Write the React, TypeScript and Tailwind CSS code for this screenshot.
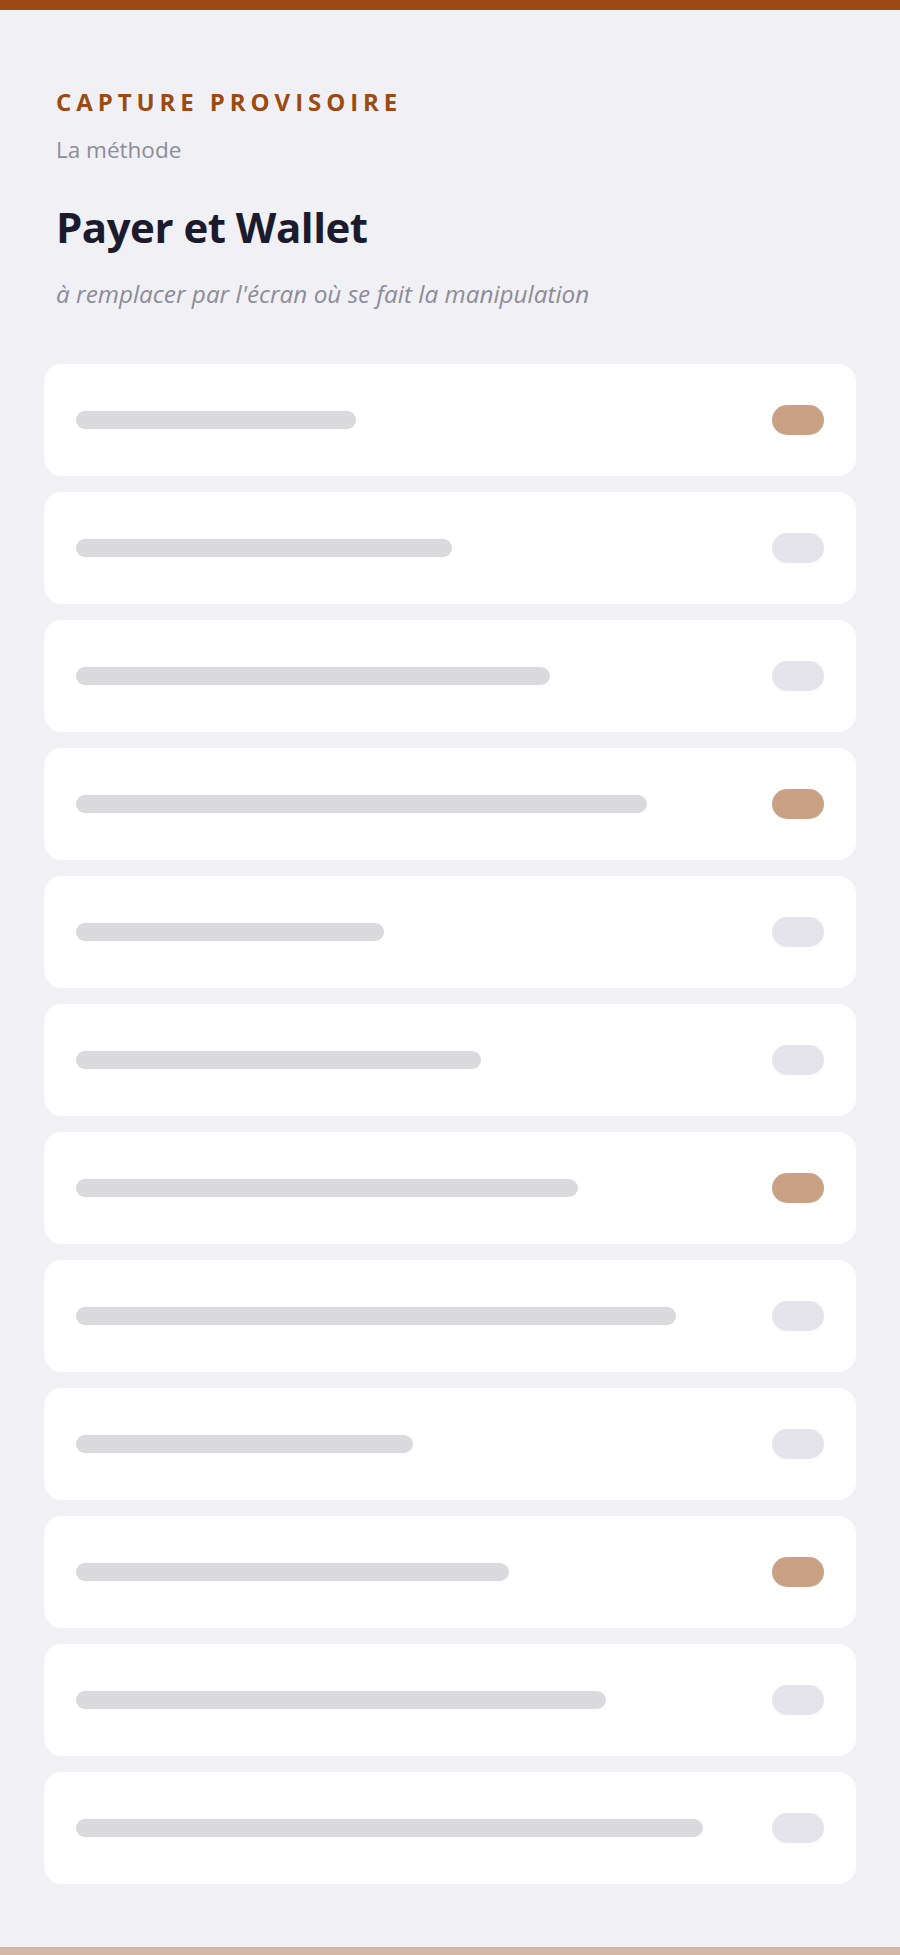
const lignes = [
  { largeur: 280, actif: true },
  { largeur: 376, actif: false },
  { largeur: 474, actif: false },
  { largeur: 571, actif: true },
  { largeur: 308, actif: false },
  { largeur: 405, actif: false },
  { largeur: 502, actif: true },
  { largeur: 600, actif: false },
  { largeur: 337, actif: false },
  { largeur: 433, actif: true },
  { largeur: 530, actif: false },
  { largeur: 627, actif: false },
];

function Ligne({ largeur, actif }: { largeur: number; actif: boolean }) {
  return (
    <div className="flex h-[112px] items-center justify-between rounded-[18px] bg-white px-8">
      <div className="h-[18px] rounded-full bg-[#d9d9de]" style={{ width: largeur }} />
      <div className={`h-[30px] w-[52px] rounded-full ${actif ? "bg-[#c9a184]" : "bg-[#e4e4ea]"}`} />
    </div>
  );
}

/** Capture provisoire : squelette de liste en attendant la vraie capture */
export default function App() {
  return (
    <div className="flex min-h-[1955px] flex-col bg-[#f1f1f5] font-['Open_Sans',sans-serif]">
      <div className="h-[10px] bg-[#9a4a12]" />
      <main className="flex-1 px-[44px] pt-[80px]">
        <header className="px-3">
          <p className="text-[24px] font-bold uppercase leading-none tracking-[0.205em] text-[#9a4a12]">
            Capture provisoire
          </p>
          <p className="mt-[25px] text-[22.5px] leading-none text-[#8c8c99]">La méthode</p>
          <h1 className="mt-[44px] text-[42px] font-bold leading-none tracking-[-0.012em] text-[#1c1b2e]">
            Payer et Wallet
          </h1>
          <p className="mt-[34px] text-[24.3px] italic leading-none text-[#8c8c99]">
            à remplacer par l'écran où se fait la manipulation
          </p>
        </header>
        <div className="mt-[58px] flex flex-col gap-4">
          {lignes.map((l, i) => (
            <Ligne key={i} largeur={l.largeur} actif={l.actif} />
          ))}
        </div>
      </main>
      <div className="h-[8px] bg-[#d4b6a5]" />
    </div>
  );
}
